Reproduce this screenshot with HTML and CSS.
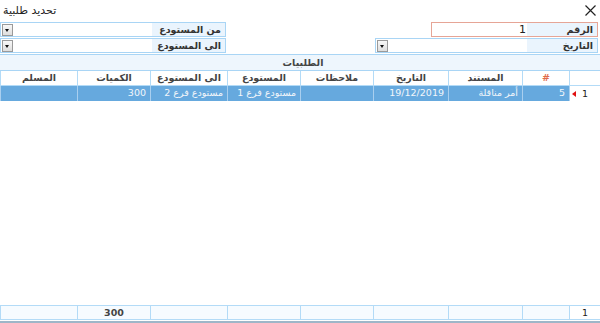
FILE: index.html
```html
<!DOCTYPE html>
<html lang="ar">
<head>
    <meta charset="UTF-8">
    <title>تحديد طلبية</title>
    <link rel="stylesheet" href="styles.css">
</head>
<body>
    <div class="window">
        <div class="titlebar">
            <span class="title">تحديد طلبية</span>
            <svg class="close" width="11" height="11" viewBox="0 0 11 11">
                <path d="M0.5 0.5 L10.5 10.5 M10.5 0.5 L0.5 10.5" stroke="#222" stroke-width="1.2" fill="none"/>
            </svg>
        </div>

        <div class="filters">
            <div class="filter-row">
                <div class="field field-number">
                    <div class="label">الرقم</div>
                    <div class="input"><span class="value">1</span></div>
                </div>
                <div class="field field-store">
                    <div class="label">من المستودع</div>
                    <div class="input"><span class="drop"></span></div>
                </div>
            </div>
            <div class="filter-row">
                <div class="field field-date">
                    <div class="label">التاريخ</div>
                    <div class="input"><span class="drop"></span></div>
                </div>
                <div class="field field-store">
                    <div class="label">الى المستودع</div>
                    <div class="input"><span class="drop"></span></div>
                </div>
            </div>
        </div>

        <div class="grid">
            <div class="band">الطلبيات</div>
            <div class="row head">
                <div class="cell"></div>
                <div class="cell hash">#</div>
                <div class="cell">المستند</div>
                <div class="cell">التاريخ</div>
                <div class="cell">ملاحظات</div>
                <div class="cell">المستودع</div>
                <div class="cell">الى المستودع</div>
                <div class="cell">الكميات</div>
                <div class="cell">المسلم</div>
            </div>
            <div class="row data selected">
                <div class="cell indicator"><span>1</span><span class="arrow"></span></div>
                <div class="cell">5</div>
                <div class="cell">أمر مناقلة</div>
                <div class="cell">19/12/2019</div>
                <div class="cell"></div>
                <div class="cell">مستودع فرع 1</div>
                <div class="cell">مستودع فرع 2</div>
                <div class="cell">300</div>
                <div class="cell"></div>
            </div>
            <div class="rows-empty"></div>
            <div class="row foot">
                <div class="cell indicator"><span>1</span></div>
                <div class="cell"></div>
                <div class="cell"></div>
                <div class="cell"></div>
                <div class="cell"></div>
                <div class="cell"></div>
                <div class="cell"></div>
                <div class="cell total">300</div>
                <div class="cell"></div>
            </div>
        </div>
        <div class="statusline"></div>
    </div>
</body>
</html>
```

FILE: styles.css
```css
html, body {
    margin: 0;
    padding: 0;
    background-color: #ffffff;
}
body {
    font-family: "DejaVu Sans", "Noto Sans", sans-serif;
    font-size: 10px;
    color: #222;
}
.window {
    width: 600px;
    height: 323px;
    display: flex;
    flex-direction: column;
    overflow: hidden;
}
.titlebar {
    height: 22px;
    display: flex;
    align-items: center;
    justify-content: space-between;
    padding: 0 4px 0 3px;
    box-sizing: border-box;
}
.title {
    font-size: 11px;
    margin-top: -2px;
}
.close {
    margin-top: -2px;
}

/* filter fields */
.filters {
    display: flex;
    flex-direction: column;
    gap: 1px;
}
.filter-row {
    display: flex;
    direction: rtl;
    justify-content: space-between;
    padding-right: 2px;
}
.field {
    display: flex;
    direction: rtl;
    height: 15px;
    box-sizing: border-box;
    border: 1px solid #a9d5f5;
}
.field-number {
    width: 167px;
    border-color: #e6a596;
}
.field-date {
    width: 223px;
}
.field-store {
    width: 226px;
    margin-right: auto;
    margin-left: 0;
}
.label {
    width: 70px;
    background-color: #eaf4fd;
    font-weight: bold;
    font-size: 9.5px;
    line-height: 13px;
    padding-right: 4px;
    box-sizing: border-box;
    color: #333;
}
.field-store .label {
    width: 73px;
}
.input {
    flex: 1;
    display: flex;
    align-items: center;
    background-color: #fff;
}
.value {
    font-size: 11px;
    line-height: 13px;
    padding-right: 1px;
}
.drop {
    margin-right: auto;
    margin-left: 1px;
    width: 9px;
    height: 10px;
    border: 1px solid #9a9a9a;
    background: linear-gradient(#f8f8f8, #dedede);
    position: relative;
}
.drop::after {
    content: "";
    position: absolute;
    left: 2px;
    top: 4px;
    border-left: 2.5px solid transparent;
    border-right: 2.5px solid transparent;
    border-top: 3px solid #111;
}

/* grid */
.grid {
    flex: 1;
    display: flex;
    flex-direction: column;
    margin-top: 1px;
    border-top: 1px solid #a9d5f5;
}
.band {
    height: 16px;
    background-color: #eef6fd;
    border-bottom: 1px solid #a9d5f5;
    box-sizing: border-box;
    text-align: center;
    font-weight: bold;
    font-size: 9.5px;
    line-height: 15px;
    color: #444;
    padding-left: 6px;
}
.row {
    display: grid;
    direction: rtl;
    grid-template-columns: 31px 47px 74px 75px 73px 73px 77px 73px 77px;
    height: 15px;
}
.cell {
    border-left: 1px solid #b3dbf7;
    box-sizing: border-box;
    font-size: 9.5px;
    line-height: 15px;
    padding: 0 4px;
    white-space: nowrap;
    overflow: hidden;
}
.head .cell {
    text-align: center;
    font-weight: bold;
    color: #444;
    border-bottom: 1px solid #b3dbf7;
    line-height: 14px;
}
.head .hash {
    color: #e06a4a;
}
.selected {
    background-color: #66a9de;
    color: #f2f6fa;
}
.selected .cell {
    border-left-color: #a9cfef;
    line-height: 14px;
}
.cell.indicator {
    background-color: #fff;
    color: #222;
    display: flex;
    align-items: center;
    padding-right: 12px;
    gap: 6px;
}
.arrow {
    width: 0;
    height: 0;
    border-top: 3.5px solid transparent;
    border-bottom: 3.5px solid transparent;
    border-right: 4px solid #e01010;
}
.rows-empty {
    flex: 1;
}
.foot {
    background-color: #f6fbff;
    border-top: 1px solid #b3dbf7;
    border-bottom: 1px solid #b3dbf7;
    height: 15px;
    box-sizing: border-box;
    margin-bottom: 0;
}
.foot .cell {
    line-height: 13px;
}
.foot .total {
    text-align: center;
    font-weight: bold;
    color: #444;
}
.statusline {
    height: 2px;
    background-color: #9fb6c8;
    margin-top: 1px;
}
```
